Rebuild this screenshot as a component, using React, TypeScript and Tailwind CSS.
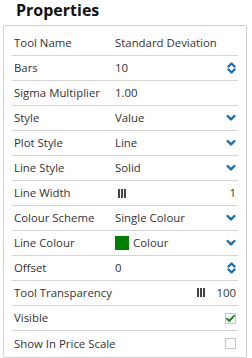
import React from "react";

const font = { fontFamily: '"Open Sans", "Noto Sans", sans-serif' };

function Spinner() {
  return (
    <svg width="9" height="12" viewBox="0 0 9 12" className="block">
      <polyline points="1.5,4.5 4.5,1.5 7.5,4.5" fill="none" stroke="#1b6fb5" strokeWidth="2.4" strokeLinecap="round" strokeLinejoin="round" />
      <polyline points="1.5,7.5 4.5,10.5 7.5,7.5" fill="none" stroke="#1b6fb5" strokeWidth="2.4" strokeLinecap="round" strokeLinejoin="round" />
    </svg>
  );
}

function Chevron() {
  return (
    <svg width="10" height="8" viewBox="0 0 10 8" className="block">
      <polyline points="1.6,2 5,5.4 8.4,2" fill="none" stroke="#1b6fb5" strokeWidth="2.4" strokeLinecap="round" strokeLinejoin="round" />
    </svg>
  );
}

function Bars() {
  return (
    <svg width="8" height="9" viewBox="0 0 8 9" className="block">
      <rect x="0" y="0" width="2" height="9" fill="#444" />
      <rect x="3" y="0" width="2" height="9" fill="#444" />
      <rect x="6" y="0" width="2" height="9" fill="#444" />
    </svg>
  );
}

function Checkbox({ checked }: { checked?: boolean }) {
  return (
    <div className="w-[11px] h-[11px] border border-[#c4c4c4] bg-white relative">
      {checked && (
        <svg width="11" height="11" viewBox="0 0 11 11" className="absolute -left-px -top-px">
          <polyline points="2,5.8 4.3,8 9,2.8" fill="none" stroke="#1d8f1d" strokeWidth="2" strokeLinecap="round" strokeLinejoin="round" />
        </svg>
      )}
    </div>
  );
}

type Row = { label: string; value?: React.ReactNode; right?: React.ReactNode };

export default function App() {
  const rows: Row[] = [
    { label: "Tool Name", value: "Standard Deviation" },
    { label: "Bars", value: "10", right: <Spinner /> },
    { label: "Sigma Multiplier", value: "1.00" },
    { label: "Style", value: "Value", right: <Chevron /> },
    { label: "Plot Style", value: "Line", right: <Chevron /> },
    { label: "Line Style", value: "Solid", right: <Chevron /> },
    {
      label: "Line Width",
      value: (
        <span className="ml-[3px] flex items-center">
          <Bars />
        </span>
      ),
      right: <span>1</span>,
    },
    { label: "Colour Scheme", value: "Single Colour", right: <Chevron /> },
    {
      label: "Line Colour",
      value: (
        <span className="flex items-center">
          <span className="w-[14px] h-[14px] bg-[#008000] mr-[4px]" />
          <span>Colour</span>
        </span>
      ),
      right: <Chevron />,
    },
    { label: "Offset", value: "0", right: <Spinner /> },
    {
      label: "Tool Transparency",
      right: (
        <span className="flex items-center">
          <Bars />
          <span className="ml-[11px]">100</span>
        </span>
      ),
    },
    { label: "Visible", right: <Checkbox checked /> },
    { label: "Show In Price Scale", right: <Checkbox /> },
  ];

  return (
    <div className="w-[252px] h-[358px] bg-white text-[#333] text-[11.4px]" style={font}>
      <div className="pl-[16px] h-[22px] text-[16px] leading-[20px] font-bold text-[#111]">
        Properties
      </div>
      <div className="ml-[3px] mt-[3px] w-[244px] border border-[#cfcfcf] rounded-[2px] px-[8px] pt-[3px] pb-[1px]">
        {rows.map((r, i) => (
          <div
            key={r.label}
            className={
              "flex items-center " +
              (i < rows.length - 1 ? "border-b border-[#d4d4d4] " : "") +
              (i === 0 ? "h-[27px] pt-[2px]" : "h-[25px]")
            }
          >
            <div className="w-[103px] pl-[2px] whitespace-nowrap">{r.label}</div>
            <div className="flex-1 flex items-center whitespace-nowrap">{r.value}</div>
            <div className="pr-[2px] flex items-center">{r.right}</div>
          </div>
        ))}
      </div>
    </div>
  );
}
